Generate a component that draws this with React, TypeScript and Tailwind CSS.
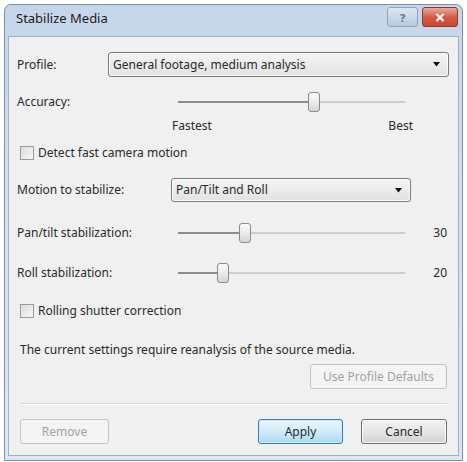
import React from "react";

const font = { fontFamily: '"Noto Sans", "Open Sans", sans-serif' };

const Dropdown = ({ text, className }: { text: string; className: string }) => (
  <div
    className={`flex items-center justify-between rounded-[3px] border border-[#7a7a7a] bg-gradient-to-b from-[#f4f4f4] to-[#e2e2e2] pl-[4px] pr-[7px] shadow-[inset_0_0_0_1px_#fbfbfb] ${className}`}
  >
    <span className="text-[12px] text-[#2a2a2a]">{text}</span>
    <svg width="8" height="5" viewBox="0 0 8 5">
      <path d="M0 0 H7 L3.5 4.5 Z" fill="#111" />
    </svg>
  </div>
);

const Slider = ({ pos }: { pos: number }) => (
  <div className="relative h-[22px] w-[227px]">
    <div className="absolute left-0 right-0 top-[10px] h-[2px] bg-[#cdcdcd]" />
    <div
      className="absolute left-0 top-[10px] h-[2px] bg-[#8d8d8d]"
      style={{ width: pos }}
    />
    <div
      className="absolute top-[1px] h-[20px] w-[12px] rounded-[3px] border border-[#8a8a8a] bg-gradient-to-b from-[#fcfcfc] via-[#ececec] to-[#d4d4d4]"
      style={{ left: pos - 6 }}
    />
  </div>
);

const Checkbox = ({ label }: { label: string }) => (
  <div className="flex items-center">
    <div className="h-[14px] w-[14px] border border-[#9a9a9a] bg-gradient-to-br from-[#dcdcdc] to-[#f8f8f8]" />
    <span className="ml-[4px] text-[12px]">{label}</span>
  </div>
);

export default function App() {
  return (
    <div className="h-[462px] w-[467px] bg-white px-[4px] pt-[4px]" style={font}>
      <div className="flex h-[457px] flex-col rounded-t-[7px] border border-[#7c8ea6] bg-gradient-to-b from-[#c6d6ea] via-[#d5e2f1] to-[#dbe7f4] px-[3px] pb-[4px]">
        {/* title bar */}
        <div className="flex h-[31px] items-start justify-between">
          <span className="ml-[8px] mt-[4px] text-[13px] text-[#1c1c1c]">Stabilize Media</span>
          <div className="mr-[1px] mt-[2px] flex gap-[4px]">
            <div className="flex h-[20px] w-[31px] items-center justify-center rounded-[3px] border border-[#8fa3bd] bg-gradient-to-b from-[#dde7f3] to-[#b7c9df]">
              <span className="text-[11px] font-bold leading-none text-[#5d6f8a]">?</span>
            </div>
            <div className="flex h-[20px] w-[36px] items-center justify-center rounded-[3px] border border-[#8a3a30] bg-gradient-to-b from-[#eba99b] via-[#d65c47] to-[#c8492f]">
              <svg width="10" height="9" viewBox="0 0 10 9">
                <path d="M1.5 1 L8.5 8 M8.5 1 L1.5 8" stroke="#fff" strokeWidth="2.2" />
              </svg>
            </div>
          </div>
        </div>
        {/* client area */}
        <div className="flex flex-1 flex-col border border-[#9fb0c4] bg-[#f0f0f0] pt-[15px] text-[12px] text-[#2a2a2a]">
          <div className="flex h-[25px] items-center">
            <span className="ml-[8px] w-[91px]">Profile:</span>
            <Dropdown text="General footage, medium analysis" className="h-[25px] w-[341px]" />
          </div>
          <div className="mt-[14px] flex h-[22px] items-center">
            <span className="ml-[8px] w-[161px]">Accuracy:</span>
            <Slider pos={136} />
          </div>
          <div className="mt-[5px] flex h-[16px] w-[404px] items-center justify-between pl-[163px]">
            <span>Fastest</span>
            <span>Best</span>
          </div>
          <div className="ml-[11px] mt-[11px] flex h-[16px] items-center">
            <Checkbox label="Detect fast camera motion" />
          </div>
          <div className="mt-[17px] flex h-[24px] items-center">
            <span className="ml-[8px] w-[154px]">Motion to stabilize:</span>
            <Dropdown text="Pan/Tilt and Roll" className="h-[24px] w-[240px]" />
          </div>
          <div className="mt-[19px] flex h-[24px] items-center">
            <span className="ml-[8px] w-[161px]">Pan/tilt stabilization:</span>
            <Slider pos={67} />
            <span className="ml-auto mr-[11px]">30</span>
          </div>
          <div className="mt-[16px] flex h-[24px] items-center">
            <span className="ml-[8px] w-[161px]">Roll stabilization:</span>
            <Slider pos={45} />
            <span className="ml-auto mr-[11px]">20</span>
          </div>
          <div className="ml-[11px] mt-[18px] flex h-[16px] items-center">
            <Checkbox label="Rolling shutter correction" />
          </div>
          <div className="ml-[11px] mt-[23px] flex h-[16px] items-center">
            The current settings require reanalysis of the source media.
          </div>
          <div className="mr-[11px] mt-[6px] flex justify-end">
            <div className="flex h-[25px] w-[137px] items-center justify-center rounded-[3px] border border-[#c4c4c4] bg-[#f4f4f4] text-[#a3a3a3]">
              Use Profile Defaults
            </div>
          </div>
          <div className="mx-[11px] mt-[14px] h-[2px] border-t border-b border-t-[#d5d5d5] border-b-[#ffffff]" />
          <div className="mt-[14px] flex h-[25px] items-center px-[11px]">
            <div className="flex h-[25px] w-[89px] items-center justify-center rounded-[3px] border border-[#c4c4c4] bg-[#f4f4f4] text-[#a3a3a3]">
              Remove
            </div>
            <div className="ml-auto flex h-[25px] w-[85px] items-center justify-center rounded-[3px] border border-[#3d7bad] bg-gradient-to-b from-[#eaf6fd] via-[#d0ecfa] to-[#a7d9f5] shadow-[inset_0_0_0_1px_#c8ecfc]">
              Apply
            </div>
            <div className="ml-[18px] flex h-[25px] w-[86px] items-center justify-center rounded-[3px] border border-[#707070] bg-gradient-to-b from-[#f3f3f3] via-[#e6e6e6] to-[#d2d2d2] shadow-[inset_0_0_0_1px_#fafafa]">
              Cancel
            </div>
          </div>
        </div>
      </div>
    </div>
  );
}
